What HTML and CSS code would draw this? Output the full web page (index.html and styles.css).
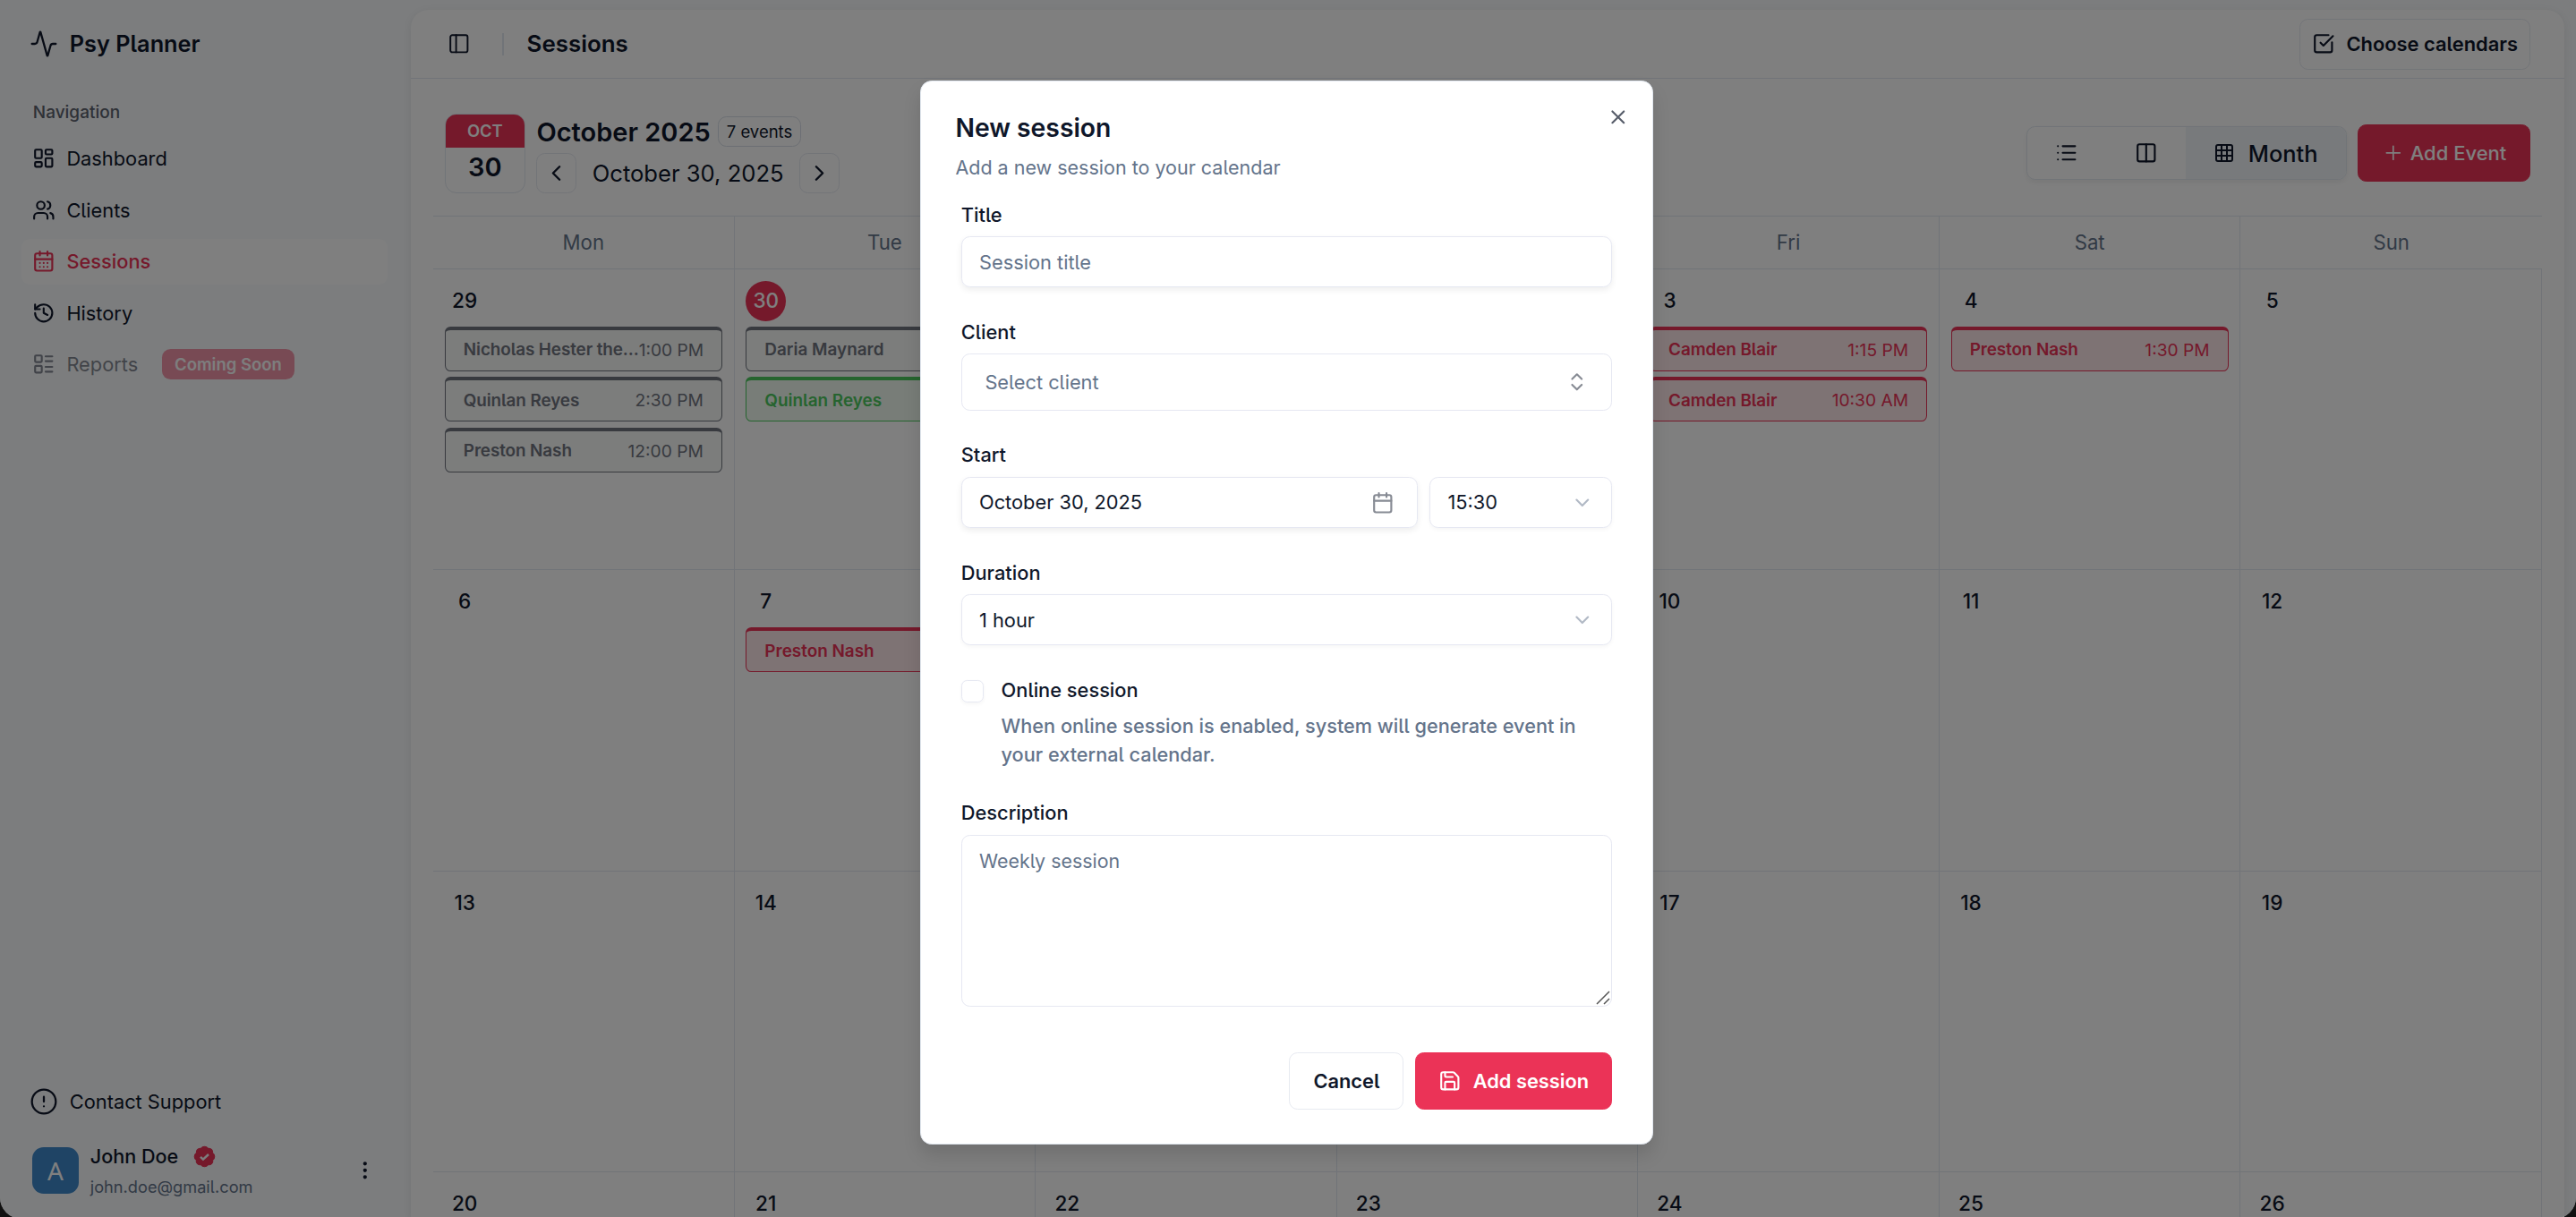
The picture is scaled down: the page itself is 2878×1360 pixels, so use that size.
FILE: index.html
```html
<!DOCTYPE html>
<html lang="en">
<head>
  <meta charset="UTF-8" />
  <meta name="viewport" content="width=device-width, initial-scale=1.0"/>
  <title>Psy Planner - Sessions</title>
  <link rel="stylesheet" href="styles.css">
</head>
<body>

  <div class="app">
    <aside class="sidebar">
      <div class="brand">
        <svg class="icon icon-lg" viewBox="0 0 24 24"><path d="M22 12h-2.48a2 2 0 0 0-1.93 1.46l-2.35 8.36a.25.25 0 0 1-.48 0L9.24 2.18a.25.25 0 0 0-.48 0l-2.35 8.36A2 2 0 0 1 4.49 12H2"/></svg>
        <span>Psy Planner</span>
      </div>

      <nav class="nav">
        <div class="nav-label">Navigation</div>
        <a class="nav-item">
          <svg class="icon" viewBox="0 0 24 24"><rect width="7" height="9" x="3" y="3" rx="1"/><rect width="7" height="5" x="14" y="3" rx="1"/><rect width="7" height="9" x="14" y="12" rx="1"/><rect width="7" height="5" x="3" y="16" rx="1"/></svg>
          <span>Dashboard</span>
        </a>
        <a class="nav-item">
          <svg class="icon" viewBox="0 0 24 24"><path d="M16 21v-2a4 4 0 0 0-4-4H6a4 4 0 0 0-4 4v2"/><circle cx="9" cy="7" r="4"/><path d="M22 21v-2a4 4 0 0 0-3-3.87"/><path d="M16 3.13a4 4 0 0 1 0 7.75"/></svg>
          <span>Clients</span>
        </a>
        <a class="nav-item active">
          <svg class="icon" viewBox="0 0 24 24"><path d="M8 2v4M16 2v4"/><rect width="18" height="18" x="3" y="4" rx="2"/><path d="M3 10h18M8 14h.01M12 14h.01M16 14h.01M8 18h.01M12 18h.01M16 18h.01"/></svg>
          <span>Sessions</span>
        </a>
        <a class="nav-item">
          <svg class="icon" viewBox="0 0 24 24"><path d="M3 12a9 9 0 1 0 9-9 9.75 9.75 0 0 0-6.74 2.74L3 8"/><path d="M3 3v5h5M12 7v5l4 2"/></svg>
          <span>History</span>
        </a>
        <a class="nav-item disabled">
          <svg class="icon" viewBox="0 0 24 24"><rect width="7" height="7" x="3" y="3" rx="1"/><rect width="7" height="7" x="3" y="14" rx="1"/><path d="M14 4h7M14 9h7M14 15h7M14 20h7"/></svg>
          <span>Reports</span>
          <span class="soon">Coming Soon</span>
        </a>
      </nav>

      <div class="sidebar-footer">
        <a class="support">
          <svg class="icon icon-lg" viewBox="0 0 24 24"><circle cx="12" cy="12" r="10"/><path d="M12 8v4M12 16h.01"/></svg>
          <span>Contact Support</span>
        </a>
        <div class="user">
          <div class="avatar">A</div>
          <div class="user-info">
            <div class="user-name">John Doe
              <svg class="verified" viewBox="0 0 24 24"><path class="seal" d="M3.85 8.62a4 4 0 0 1 4.78-4.77 4 4 0 0 1 6.74 0 4 4 0 0 1 4.78 4.78 4 4 0 0 1 0 6.74 4 4 0 0 1-4.77 4.78 4 4 0 0 1-6.75 0 4 4 0 0 1-4.78-4.77 4 4 0 0 1 0-6.76Z"/><path class="tick" d="m8 12.4 2.6 2.4 5.4-5"/></svg>
            </div>
            <div class="user-email">john.doe@gmail.com</div>
          </div>
          <svg class="icon" viewBox="0 0 24 24"><circle cx="12" cy="5" r="1"/><circle cx="12" cy="12" r="1"/><circle cx="12" cy="19" r="1"/></svg>
        </div>
      </div>
    </aside>

    <main class="main">
      <header class="topbar">
        <svg class="icon panel-icon" viewBox="0 0 24 24"><rect width="18" height="18" x="3" y="3" rx="2"/><path d="M9 3v18"/></svg>
        <span class="separator"></span>
        <h1>Sessions</h1>
        <button class="btn choose">
          <svg class="icon" viewBox="0 0 24 24"><path d="M21 10.656V19a2 2 0 0 1-2 2H5a2 2 0 0 1-2-2V5a2 2 0 0 1 2-2h12.344"/><path d="m9 11 3 3L22 4"/></svg>
          Choose calendars
        </button>
      </header>

      <section class="cal-header">
        <div class="date-card">
          <div class="date-month">OCT</div>
          <div class="date-day">30</div>
        </div>
        <div class="date-info">
          <div class="month-row">
            <h2>October 2025</h2>
            <span class="count">7 events</span>
          </div>
          <div class="date-nav">
            <button class="btn arrow"><svg class="icon" viewBox="0 0 24 24"><path d="m15 18-6-6 6-6"/></svg></button>
            <span>October 30, 2025</span>
            <button class="btn arrow"><svg class="icon" viewBox="0 0 24 24"><path d="m9 18 6-6-6-6"/></svg></button>
          </div>
        </div>
        <div class="views">
          <button><svg class="icon" viewBox="0 0 24 24"><path d="M3 5h.01M3 12h.01M3 19h.01M8 5h13M8 12h13M8 19h13"/></svg></button>
          <button><svg class="icon" viewBox="0 0 24 24"><rect width="18" height="18" x="3" y="3" rx="2"/><path d="M12 3v18"/></svg></button>
          <button class="selected"><svg class="icon" viewBox="0 0 24 24"><rect width="18" height="18" x="3" y="3" rx="2"/><path d="M3 9h18M3 15h18M9 3v18M15 3v18"/></svg>Month</button>
        </div>
        <button class="btn primary add-event">
          <svg class="icon" viewBox="0 0 24 24"><path d="M5 12h14M12 5v14"/></svg>
          Add Event
        </button>
      </section>

      <section class="calendar">
        <div class="weekdays">
          <div>Mon</div><div>Tue</div><div>Wed</div><div>Thu</div><div>Fri</div><div>Sat</div><div>Sun</div>
        </div>
        <div class="days">
          <div class="day">
            <span class="num">29</span>
            <div class="event gray"><b>Nicholas Hester the...</b><span>1:00 PM</span></div>
            <div class="event gray"><b>Quinlan Reyes</b><span>2:30 PM</span></div>
            <div class="event gray"><b>Preston Nash</b><span>12:00 PM</span></div>
          </div>
          <div class="day">
            <span class="num today">30</span>
            <div class="event gray"><b>Daria Maynard</b></div>
            <div class="event green"><b>Quinlan Reyes</b></div>
          </div>
          <div class="day"><span class="num">1</span></div>
          <div class="day"><span class="num">2</span></div>
          <div class="day">
            <span class="num">3</span>
            <div class="event red"><b>Camden Blair</b><span>1:15 PM</span></div>
            <div class="event red"><b>Camden Blair</b><span>10:30 AM</span></div>
          </div>
          <div class="day">
            <span class="num">4</span>
            <div class="event red"><b>Preston Nash</b><span>1:30 PM</span></div>
          </div>
          <div class="day"><span class="num">5</span></div>

          <div class="day"><span class="num">6</span></div>
          <div class="day">
            <span class="num">7</span>
            <div class="event red"><b>Preston Nash</b></div>
          </div>
          <div class="day"><span class="num">8</span></div>
          <div class="day"><span class="num">9</span></div>
          <div class="day"><span class="num">10</span></div>
          <div class="day"><span class="num">11</span></div>
          <div class="day"><span class="num">12</span></div>

          <div class="day"><span class="num">13</span></div>
          <div class="day"><span class="num">14</span></div>
          <div class="day"><span class="num">15</span></div>
          <div class="day"><span class="num">16</span></div>
          <div class="day"><span class="num">17</span></div>
          <div class="day"><span class="num">18</span></div>
          <div class="day"><span class="num">19</span></div>

          <div class="day"><span class="num">20</span></div>
          <div class="day"><span class="num">21</span></div>
          <div class="day"><span class="num">22</span></div>
          <div class="day"><span class="num">23</span></div>
          <div class="day"><span class="num">24</span></div>
          <div class="day"><span class="num">25</span></div>
          <div class="day"><span class="num">26</span></div>
        </div>
      </section>
    </main>

    <div class="overlay">
      <form class="modal">
        <svg class="icon close" viewBox="0 0 24 24"><path d="M18 6 6 18M6 6l12 12"/></svg>
        <h2>New session</h2>
        <p class="subtitle">Add a new session to your calendar</p>

        <div class="fields">
          <div class="field">
            <label>Title</label>
            <div class="control raised placeholder">Session title</div>
          </div>

          <div class="field">
            <label>Client</label>
            <div class="control client placeholder">Select client
              <svg class="icon" viewBox="0 0 24 24"><path d="m7 15 5 5 5-5M7 9l5-5 5 5"/></svg>
            </div>
          </div>

          <div class="field">
            <label>Start</label>
            <div class="start-row">
              <div class="control raised date">October 30, 2025
                <svg class="icon" viewBox="0 0 24 24"><path d="M8 2v4M16 2v4"/><rect width="18" height="18" x="3" y="4" rx="2"/><path d="M3 10h18"/></svg>
              </div>
              <div class="control select time">15:30
                <svg class="icon" viewBox="0 0 24 24"><path d="m6 9 6 6 6-6"/></svg>
              </div>
            </div>
          </div>

          <div class="field">
            <label>Duration</label>
            <div class="control select">1 hour
              <svg class="icon" viewBox="0 0 24 24"><path d="m6 9 6 6 6-6"/></svg>
            </div>
          </div>

          <div class="online">
            <span class="checkbox"></span>
            <div>
              <label>Online session</label>
              <p>When online session is enabled, system will generate event in<br>your external calendar.</p>
            </div>
          </div>

          <div class="field">
            <label>Description</label>
            <div class="textarea placeholder">Weekly session
              <svg class="grip" viewBox="0 0 18 18"><path d="M2 16 16 2M10 16l6-6"/></svg>
            </div>
          </div>

          <div class="actions">
            <button type="button" class="btn cancel">Cancel</button>
            <button type="button" class="btn primary save">
              <svg class="icon" viewBox="0 0 24 24"><path d="M15.2 3a2 2 0 0 1 1.4.6l3.8 3.8a2 2 0 0 1 .6 1.4V19a2 2 0 0 1-2 2H5a2 2 0 0 1-2-2V5a2 2 0 0 1 2-2z"/><path d="M17 21v-7a1 1 0 0 0-1-1H8a1 1 0 0 0-1 1v7M7 3v4a1 1 0 0 0 1 1h7"/></svg>
              Add session
            </button>
          </div>
        </div>
      </form>
    </div>
  </div>

</body>
</html>
```
FILE: styles.css
```css
* {
  box-sizing: border-box;
}
body {
  margin: 0;
  height: 1360px;
  overflow: hidden;
  background: #111;
  color: #0f172a;
  font-family: Inter, sans-serif;
  font-feature-settings: "cv05";
  font-size: 21.8px;
}
h1, h2, p {
  margin: 0;
}
button {
  font: inherit;
  font-feature-settings: inherit;
  color: inherit;
  background: none;
  border: none;
  padding: 0;
}
.icon {
  width: 25.6px;
  height: 25.6px;
  flex-shrink: 0;
  fill: none;
  stroke: currentColor;
  stroke-width: 2;
  stroke-linecap: round;
  stroke-linejoin: round;
}
.icon-lg {
  width: 32px;
  height: 32px;
  stroke-width: 1.7;
}
.app {
  position: relative;
  display: flex;
  height: 1362px;
  background: #f8fafc;
  border-radius: 0 0 24px 24px;
  overflow: hidden;
}

/* sidebar */
.sidebar {
  width: 459px;
  flex-shrink: 0;
  display: flex;
  flex-direction: column;
  padding: 23.4px 26px 15.6px 24px;
}
.brand, .support {
  display: flex;
  align-items: center;
  gap: 12.8px;
  height: 51.2px;
  padding-left: 9px;
}
.brand {
  font-size: 25.3px;
  font-weight: 600;
}
.nav {
  margin-top: 25.6px;
}
.nav-label {
  height: 51.2px;
  line-height: 51.2px;
  padding-left: 12.8px;
  font-size: 19px;
  font-weight: 500;
  color: #5d626e;
}
.nav-item {
  display: flex;
  align-items: center;
  gap: 12.8px;
  height: 51.2px;
  margin-bottom: 6.4px;
  padding-left: 12px;
  border-radius: 9.6px;
}
.nav-item.active {
  width: 409px;
  background: #fff;
  color: #eb3357;
  font-weight: 500;
}
.nav-item.disabled {
  opacity: 0.5;
}
.soon {
  margin-left: 14px;
  height: 34px;
  line-height: 34px;
  padding: 0 14px;
  border-radius: 9.6px;
  background: #eb3357;
  color: #fff;
  font-size: 18.5px;
  font-weight: 600;
}
.sidebar-footer {
  margin-top: auto;
}
.user {
  display: flex;
  align-items: center;
  height: 76.8px;
  margin-top: 12.8px;
  padding: 0 12px;
}
.avatar {
  width: 52px;
  height: 52px;
  border-radius: 12.8px;
  background: #3e88cb;
  color: #fff;
  font-family: "Noto Sans", sans-serif;
  font-size: 28px;
  line-height: 53px;
  text-align: center;
}
.user-info {
  flex: 1;
  padding: 2px 0 0 12.8px;
}
.user-name {
  display: flex;
  align-items: center;
  height: 32px;
  font-size: 21.6px;
  font-weight: 500;
}
.user-email {
  height: 34px;
  line-height: 36px;
  font-size: 18.2px;
  color: #64748b;
}
.verified {
  width: 27px;
  height: 27px;
  margin-left: 16px;
}
.seal {
  fill: #eb3357;
  stroke: #eb3357;
}
.tick {
  fill: none;
  stroke: #f8fafc;
  stroke-width: 2.2;
}

/* main panel */
.main {
  flex: 1;
  margin: 11px 13px 0 0;
  background: #fff;
  border-radius: 20px 20px 0 0;
  box-shadow: 0 2px 10px rgba(0,0,0,0.08);
}
.topbar {
  display: flex;
  align-items: center;
  height: 77px;
  padding: 0 38px 0 41px;
  border-bottom: 1px solid #e2e8f0;
}
.panel-icon {
  stroke-width: 1.8;
}
.separator {
  width: 2px;
  height: 25px;
  margin: 0 26px 0 35px;
  background: #e2e8f0;
}
.topbar h1 {
  flex: 1;
  padding-bottom: 2px;
  font-size: 25.9px;
  font-weight: 600;
}
.btn {
  display: flex;
  align-items: center;
  justify-content: center;
  border: 1px solid #e7eaf1;
  border-radius: 9.6px;
}
.btn.primary {
  background: #eb3357;
  border-color: #eb3357;
  color: #fff;
}
.choose {
  gap: 12.8px;
  width: 258px;
  height: 57px;
  font-size: 21.9px;
  font-weight: 600;
}
.cal-header {
  display: flex;
  align-items: center;
  height: 153px;
  padding: 13px 38px 0;
}
.date-card {
  width: 89.6px;
  height: 89px;
  border: 1px solid #e2e8f0;
  border-radius: 12.8px;
  overflow: hidden;
  text-align: center;
  font-weight: 600;
}
.date-month {
  height: 37.5px;
  line-height: 37px;
  background: #eb3357;
  color: #fff;
  font-size: 18.4px;
}
.date-day {
  line-height: 44px;
  font-size: 29px;
}
.date-info {
  flex: 1;
  padding: 4px 0 0 12.8px;
}
.month-row {
  display: flex;
  align-items: center;
  gap: 8px;
  height: 34px;
  margin-bottom: 6.4px;
}
.month-row h2 {
  font-size: 29px;
  font-weight: 600;
}
.count {
  height: 34px;
  line-height: 33px;
  padding: 0 9px;
  border: 1px solid #d9dfe8;
  border-radius: 9.6px;
  font-size: 18.5px;
}
.date-nav {
  display: flex;
  align-items: center;
  gap: 17.5px;
  font-size: 25.6px;
}
.arrow {
  width: 44.8px;
  height: 44.8px;
}
.arrow .icon {
  width: 29px;
  height: 29px;
}
.views {
  display: flex;
  height: 60px;
  margin-right: 12.4px;
  border: 1px solid #e2e8f0;
  border-radius: 9.6px;
  box-shadow: 0 3px 6px rgba(0,0,0,0.06);
  overflow: hidden;
}
.views button {
  display: flex;
  align-items: center;
  justify-content: center;
  width: 88.4px;
}
.views .selected {
  gap: 15px;
  width: 179px;
  background: #f1f5f9;
  font-size: 25.4px;
  font-weight: 500;
}
.selected .icon {
  width: 24px;
  height: 24px;
}
.add-event {
  gap: 6.4px;
  width: 193px;
  height: 64px;
  font-size: 22px;
  font-weight: 500;
}
.add-event .icon {
  stroke-width: 1.6;
}

/* month grid */
.calendar {
  width: 2356px;
  margin-left: 25px;
  border-top: 1px solid #e2e8f0;
}
.weekdays, .days {
  display: grid;
  grid-template-columns: repeat(7, 1fr);
}
.weekdays div {
  height: 59px;
  line-height: 58px;
  text-align: center;
  color: #64748b;
  font-size: 22.2px;
  border-right: 1px solid #e2e8f0;
  border-bottom: 1px solid #e2e8f0;
}
.weekdays div:last-child {
  border-right: none;
}
.day {
  height: 336.4px;
  padding: 12.8px;
  border-right: 1px solid #e2e8f0;
  border-bottom: 1px solid #e2e8f0;
  min-width: 0;
}
.num {
  display: block;
  width: 44.8px;
  height: 44.8px;
  line-height: 44.8px;
  margin-bottom: 6.4px;
  border-radius: 50%;
  text-align: center;
  font-size: 22.6px;
  font-weight: 500;
}
.num.today {
  background: #eb3357;
  color: #fff;
}
.event {
  display: flex;
  align-items: center;
  justify-content: space-between;
  height: 50px;
  margin-bottom: 6.4px;
  padding: 0 20px 1px;
  border: 1px solid;
  border-top-width: 4px;
  border-radius: 6.4px;
  font-size: 18.9px;
}
.event b {
  font-weight: 600;
  white-space: nowrap;
}
.event span {
  white-space: nowrap;
  font-size: 19.2px;
}
.event b:first-child:not(:last-child) {
  letter-spacing: -0.1px;
}
.gray {
  color: #70747f;
  background: #f8faf9;
}
.green {
  color: #4cc95e;
  background: #f1faf1;
}
.red {
  color: #eb3357;
  background: #fce6e9;
}

/* new session dialog */
.overlay {
  position: absolute;
  inset: 0;
  display: flex;
  align-items: flex-start;
  justify-content: center;
  padding: 90px 3px 0 0;
  background: rgba(0,0,0,0.5);
}
.modal {
  position: relative;
  width: 819px;
  height: 1189px;
  padding: 38.4px;
  background: #fff;
  border: 1px solid #e2e8f0;
  border-radius: 12.8px;
  box-shadow: 0 12px 20px rgba(0,0,0,0.12);
}
.close {
  position: absolute;
  top: 27px;
  right: 25.6px;
  color: #575d6a;
}
.modal h2 {
  line-height: 28.8px;
  font-size: 28.3px;
  font-weight: 600;
}
.subtitle {
  margin-top: 12.8px;
  line-height: 32px;
  color: #64748b;
  font-size: 21.5px;
}
.fields {
  padding: 25.6px 6.4px 0;
}
.field {
  margin-bottom: 38.4px;
}
.fields label {
  display: block;
  line-height: 22.4px;
  font-weight: 500;
}
.control {
  display: flex;
  align-items: center;
  justify-content: space-between;
  height: 57.6px;
  margin-top: 12.8px;
  padding: 0 19.2px;
  border: 1px solid #e6e8f2;
  border-radius: 9.6px;
  box-shadow: 0 2px 4px rgba(0,0,0,0.04);
}
.raised {
  box-shadow: 0 3px 7px rgba(0,0,0,0.07);
}
.placeholder {
  color: #64748b;
}
.client {
  height: 64px;
  padding: 0 25.6px;
  box-shadow: none;
}
.client .icon, .date .icon {
  color: #878b94;
}
.start-row {
  display: flex;
  gap: 12.8px;
}
.date {
  flex: 1;
  padding-right: 26px;
}
.time {
  width: 204px;
}
.select .icon {
  color: #b1b9c5;
}
.online {
  display: flex;
  gap: 19.2px;
  margin-bottom: 38.4px;
}
.checkbox {
  width: 25.6px;
  height: 25.6px;
  border: 1px solid #e6e8f2;
  border-radius: 6.4px;
  box-shadow: 0 2px 4px rgba(0,0,0,0.04);
}
.online p {
  margin-top: 12.8px;
  line-height: 32px;
  white-space: nowrap;
  color: #64748b;
  font-weight: 500;
  font-size: 21.7px;
}
.textarea {
  position: relative;
  height: 192px;
  margin-top: 12.8px;
  padding: 12.8px 19.2px;
  line-height: 32px;
  font-size: 21.4px;
  border: 1px solid #e6e8f2;
  border-radius: 9.6px;
}
.grip {
  position: absolute;
  right: 0;
  bottom: 0;
  width: 18px;
  height: 18px;
  fill: none;
  stroke: #555;
  stroke-width: 1.5;
}
.actions {
  display: flex;
  justify-content: flex-end;
  gap: 12.8px;
  margin-top: 51px;
  font-weight: 600;
}
.cancel {
  width: 128px;
  height: 64px;
}
.save {
  gap: 12.8px;
  width: 220px;
  height: 64px;
}
```
